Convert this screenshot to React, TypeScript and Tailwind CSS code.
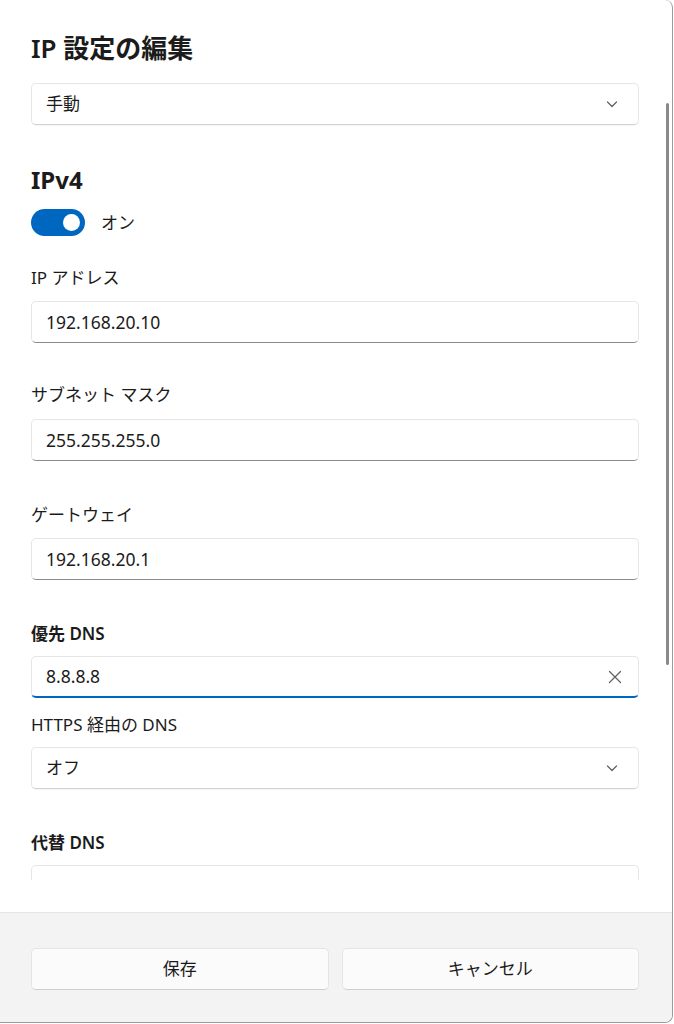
import React from "react";

const font = { fontFamily: '"Noto Sans", "Noto Sans CJK JP", sans-serif' };

function Chevron() {
  return (
    <svg width="14" height="14" viewBox="0 0 14 14" fill="none">
      <path d="M2.5 5 L7 9.5 L11.5 5" stroke="#5f5f5f" strokeWidth="1.2" strokeLinecap="round" strokeLinejoin="round" />
    </svg>
  );
}

function CloseX() {
  return (
    <svg width="14" height="14" viewBox="0 0 14 14" fill="none">
      <path d="M1.5 1.5 L12.5 12.5 M12.5 1.5 L1.5 12.5" stroke="#5f5f5f" strokeWidth="1.2" strokeLinecap="round" />
    </svg>
  );
}

function Label({ text, bold, mt }: { text: string; bold?: boolean; mt: string }) {
  return (
    <div className={`${mt} h-[24px] leading-[24px] text-[17px] text-[#1b1b1b] ${bold ? "font-semibold" : ""}`}>
      {text}
    </div>
  );
}

function Field({ value, mt }: { value: string; mt: string }) {
  return (
    <div className={`${mt} h-[42px] rounded-[5px] border border-[#e6e6e6] border-b-[#8a8a8a] bg-white flex items-center pl-[14px] text-[17.5px] text-[#1b1b1b]`}>
      {value}
    </div>
  );
}

function Select({ value, mt }: { value: string; mt: string }) {
  return (
    <div className={`${mt} h-[42px] rounded-[5px] border border-[#e6e6e6] border-b-[#d2d2d2] bg-white flex items-center justify-between pl-[14px] pr-[19px] text-[17px] text-[#1b1b1b] shadow-[0_1px_0_rgba(0,0,0,0.04)]`}>
      <span>{value}</span>
      <Chevron />
    </div>
  );
}

export default function App() {
  return (
    <div className="w-[674px] h-[1024px] bg-white" style={font}>
      <div className="relative w-[673px] h-[1023px] bg-white border-r border-b border-[#9a9a9a] rounded-br-[8px] rounded-tr-[8px] overflow-hidden flex flex-col">
        <div className="h-[912px] flex flex-col">
          <div className="h-[880px] overflow-hidden pl-[31px] pr-[33px]">
            <div className="pt-[30px] h-[66px] leading-[36px] text-[26px] font-semibold text-[#1b1b1b]">IP 設定の編集</div>
            <Select value="手動" mt="mt-[17px]" />
            <div className="mt-[39px] h-[32px] leading-[32px] text-[24px] font-bold text-[#1b1b1b]">IPv4</div>
            <div className="mt-[13px] flex items-center gap-[16px]">
              <div className="w-[54px] h-[27px] rounded-full bg-[#0067c0] flex items-center justify-end pr-[5px]">
                <div className="w-[17px] h-[17px] rounded-full bg-white" />
              </div>
              <span className="text-[17px] text-[#1b1b1b] leading-[24px]">オン</span>
            </div>
            <Label text="IP アドレス" mt="mt-[30px]" />
            <Field value="192.168.20.10" mt="mt-[11px]" />
            <Label text="サブネット マスク" mt="mt-[40px]" />
            <Field value="255.255.255.0" mt="mt-[12px]" />
            <Label text="ゲートウェイ" mt="mt-[42px]" />
            <Field value="192.168.20.1" mt="mt-[11px]" />
            <Label text="優先 DNS" bold mt="mt-[42px]" />
            <div className="mt-[10px] h-[42px] rounded-[5px] border border-[#e6e6e6] border-b-2 border-b-[#0067c0] bg-white flex items-center justify-between pl-[14px] pr-[16px] text-[17.5px] text-[#1b1b1b]">
              <span>8.8.8.8</span>
              <CloseX />
            </div>
            <Label text="HTTPS 経由の DNS" mt="mt-[15px]" />
            <Select value="オフ" mt="mt-[10px]" />
            <Label text="代替 DNS" bold mt="mt-[42px]" />
            <Field value="" mt="mt-[10px]" />
          </div>
        </div>
        <div className="flex-1 bg-[#f3f3f3] border-t border-[#e5e5e5] flex gap-[13px] pl-[31px] pr-[33px] pt-[35px]">
          <button className="flex-1 h-[42px] rounded-[5px] bg-[#fbfbfb] border border-[#e5e5e5] border-b-[#cfcfcf] text-[17px] text-[#1b1b1b]">保存</button>
          <button className="flex-1 h-[42px] rounded-[5px] bg-[#fbfbfb] border border-[#e5e5e5] border-b-[#cfcfcf] text-[17px] text-[#1b1b1b]">キャンセル</button>
        </div>
        <div className="absolute left-[666px] top-[103px] w-[3px] h-[562px] rounded-full bg-[#8a8a8a]" />
      </div>
    </div>
  );
}
